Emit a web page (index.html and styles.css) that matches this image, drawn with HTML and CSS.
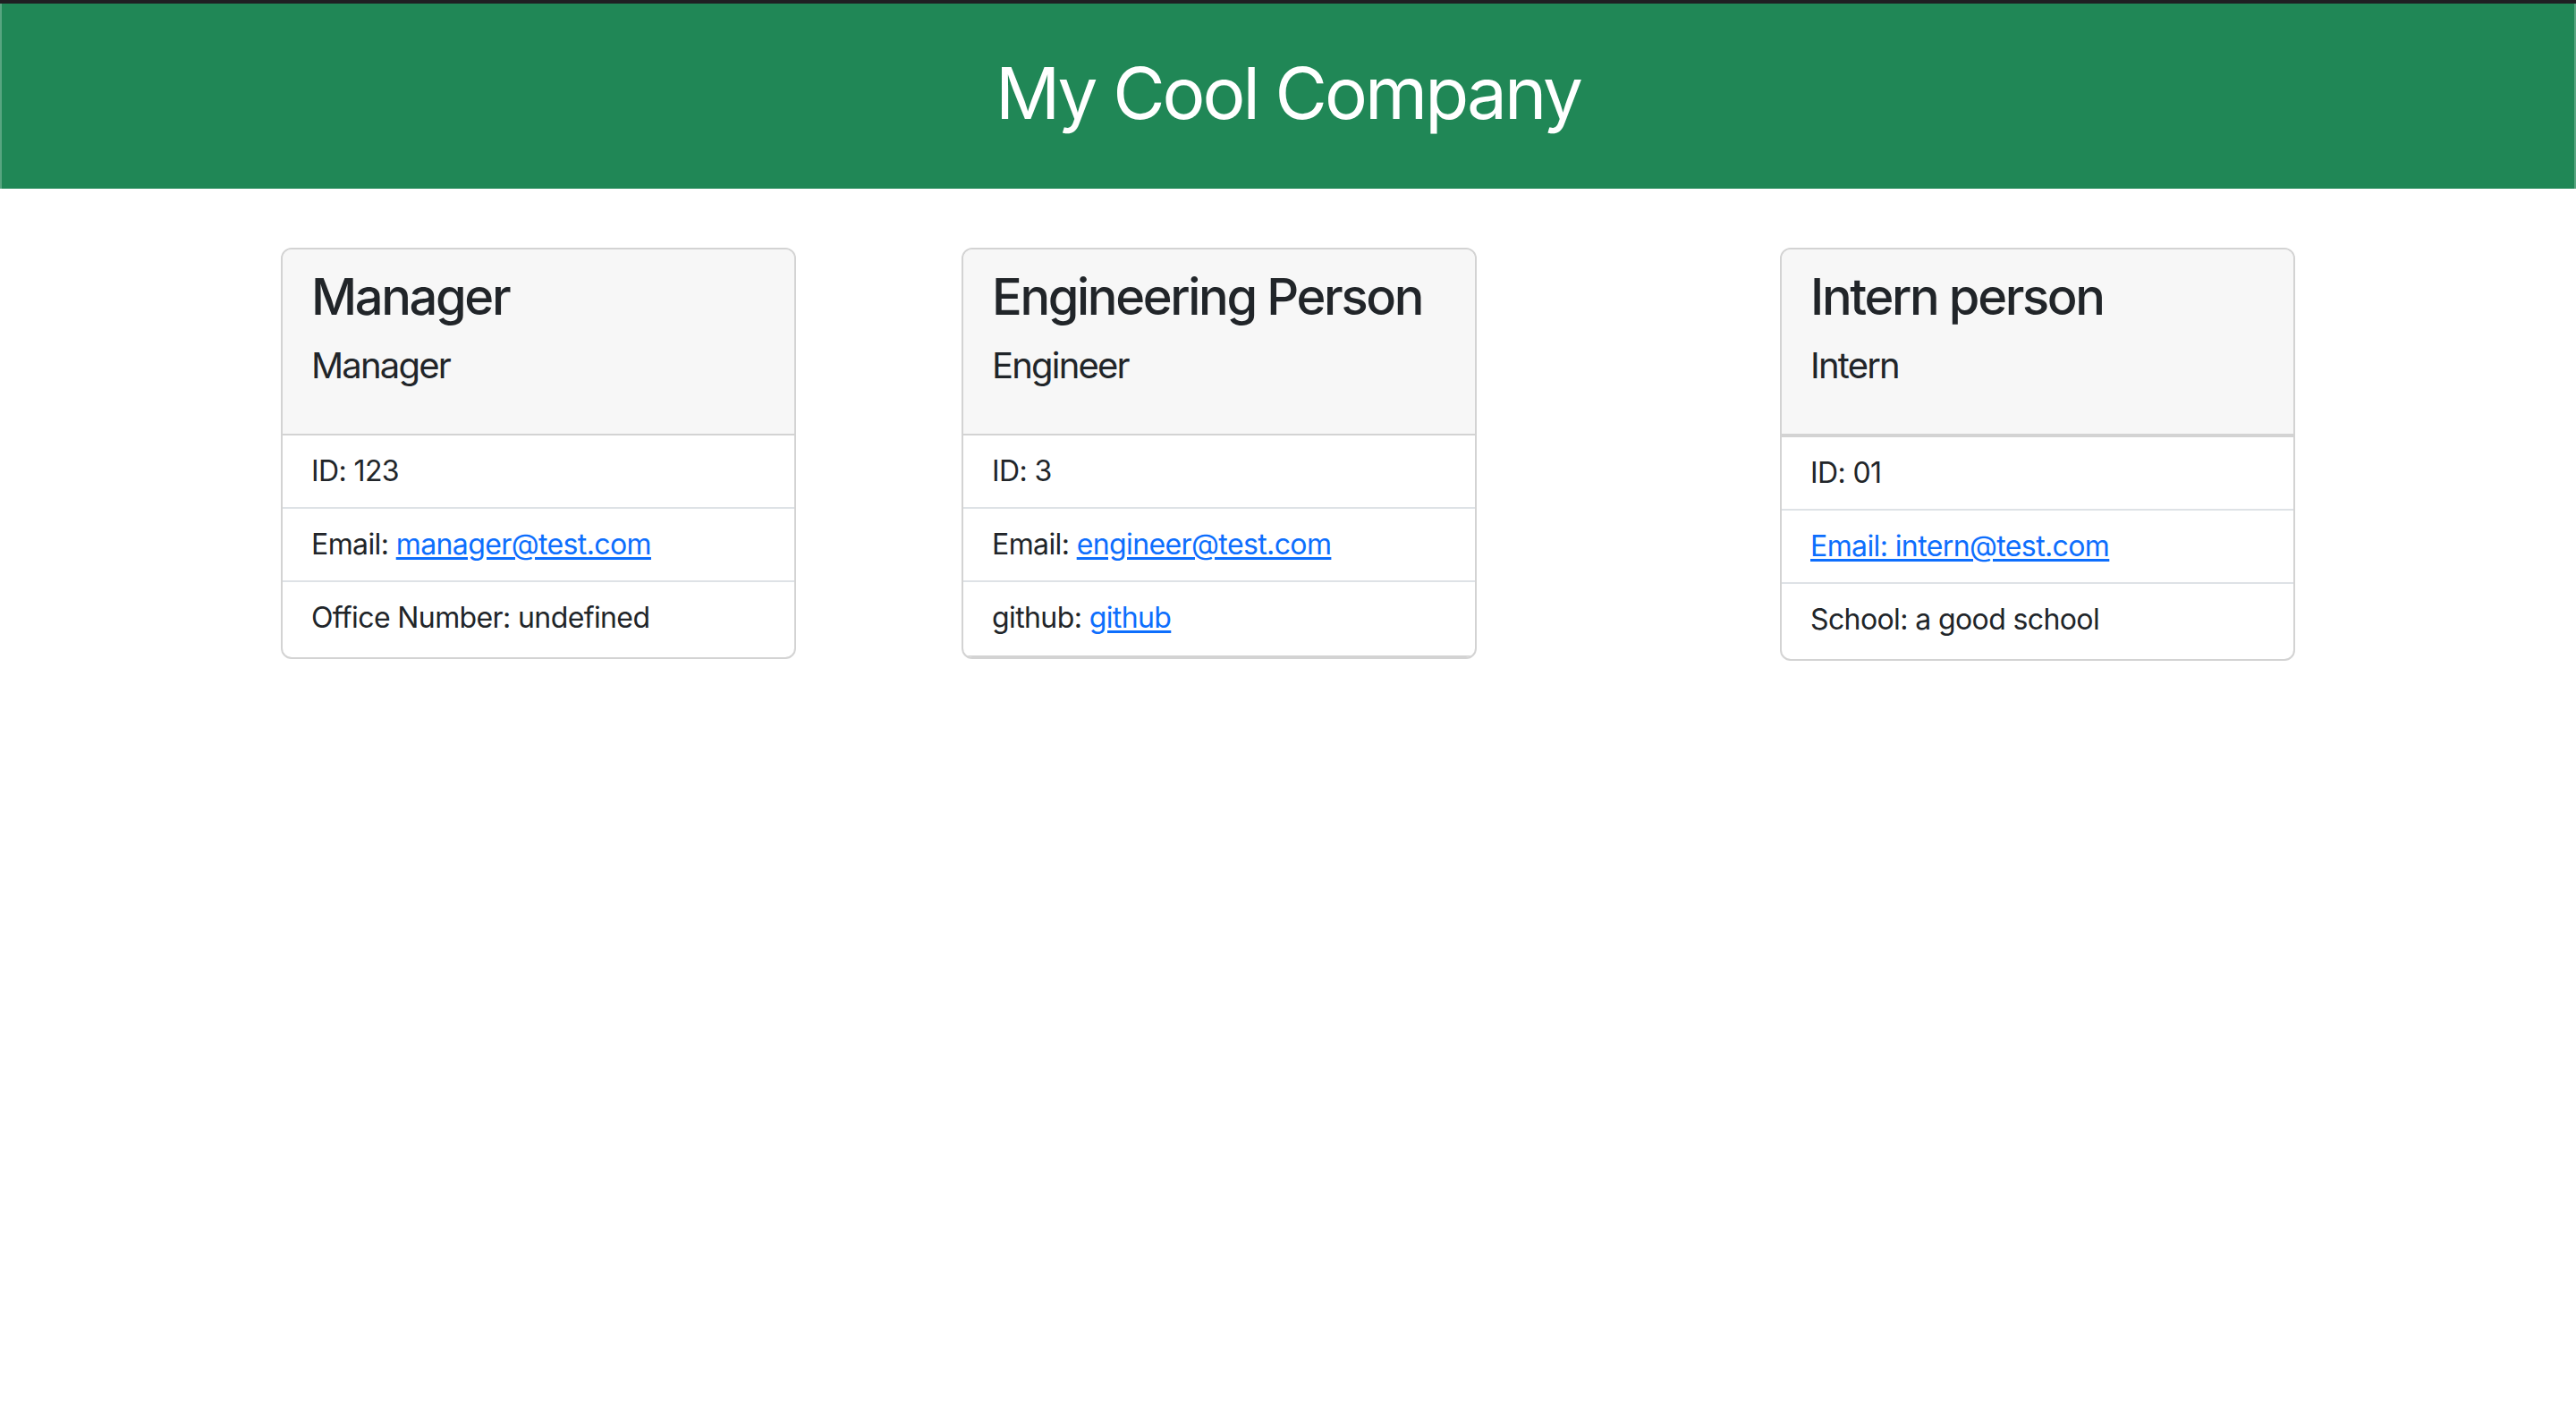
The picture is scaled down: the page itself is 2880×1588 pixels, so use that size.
FILE: index.html
```html
<!DOCTYPE html>
<html lang="en">
<head>
<meta charset="utf-8">
<title>My Cool Company</title>
<link rel="stylesheet" href="styles.css">
</head>
<body>
<div class="chrome-top"></div>
<header class="banner">
  <h1 class="banner-title">My Cool Company</h1>
</header>
<main class="cards">
  <section class="card card-manager">
    <div class="card-header">
      <h3 class="card-title">Manager</h3>
      <h5 class="card-subtitle">Manager</h5>
    </div>
    <ul class="list">
      <li class="list-item">ID: 123</li>
      <li class="list-item">Email: <a href="#">manager@test.com</a></li>
      <li class="list-item">Office Number: undefined</li>
    </ul>
  </section>
  <section class="card card-engineer">
    <div class="card-header">
      <h3 class="card-title">Engineering Person</h3>
      <h5 class="card-subtitle">Engineer</h5>
    </div>
    <ul class="list list-bottom-border">
      <li class="list-item">ID: 3</li>
      <li class="list-item">Email: <a href="#">engineer@test.com</a></li>
      <li class="list-item">github: <a href="#">github</a></li>
    </ul>
  </section>
  <section class="card card-intern">
    <div class="card-header">
      <h3 class="card-title">Intern person</h3>
      <h5 class="card-subtitle">Intern</h5>
    </div>
    <ul class="list list-top-border">
      <li class="list-item">ID: 01</li>
      <li class="list-item"><a href="#">Email: intern@test.com</a></li>
      <li class="list-item">School: a good school</li>
    </ul>
  </section>
</main>
</body>
</html>
```
FILE: styles.css
```css
* { box-sizing: border-box; }

html, body {
  margin: 0;
  padding: 0;
  background: #ffffff;
}

body {
  font-family: Inter, "Noto Sans", "Liberation Sans", sans-serif;
  color: #212529;
  font-size: 32px;
  line-height: 1.5;
  letter-spacing: -0.019em;
}

.chrome-top {
  height: 4px;
  background: #1f1f22;
}

.banner {
  background: #208756;
  border-left: 2px solid #58a580;
  border-right: 2px solid #58a580;
  height: 207px;
  padding-top: 52px;
  text-align: center;
}

.banner-title {
  margin: 0;
  font-size: 80px;
  font-weight: 400;
  line-height: 1.2;
  letter-spacing: -0.037em;
  color: #ffffff;
}

.cards {
  display: flex;
  align-items: flex-start;
  margin-top: 66px;
}

.card {
  width: 576px;
  border: 2px solid #d3d3d3;
  border-radius: 12px;
  overflow: hidden;
  background: #ffffff;
}

.card-manager { margin-left: 314px; }
.card-engineer { margin-left: 185px; }
.card-intern { margin-left: 339px; }

.card-header {
  background: #f7f7f7;
  padding: 20px 32px 52px;
  border-bottom: 2px solid #d3d3d3;
}

.card-title {
  margin: 0 0 19px;
  font-size: 56px;
  font-weight: 500;
  line-height: 1.2;
  letter-spacing: -0.042em;
  white-space: nowrap;
}

.card-subtitle {
  margin: 0;
  font-size: 40px;
  font-weight: 400;
  line-height: 1.2;
  letter-spacing: -0.045em;
}

.list {
  list-style: none;
  margin: 0;
  padding: 0;
}

.list-top-border {
  border-top: 2px solid #d3d3d3;
}

.list-item {
  padding: 16px 32px;
  border-bottom: 2px solid #dee2e6;
}

.list-item:last-child {
  border-bottom: none;
  padding-bottom: 20px;
}

.list-bottom-border .list-item:last-child {
  padding-bottom: 18px;
  border-bottom: 2px solid #d3d3d3;
}

.list-item a {
  color: #0d6efd;
  text-decoration: underline;
  text-underline-offset: 3px;
}
```
